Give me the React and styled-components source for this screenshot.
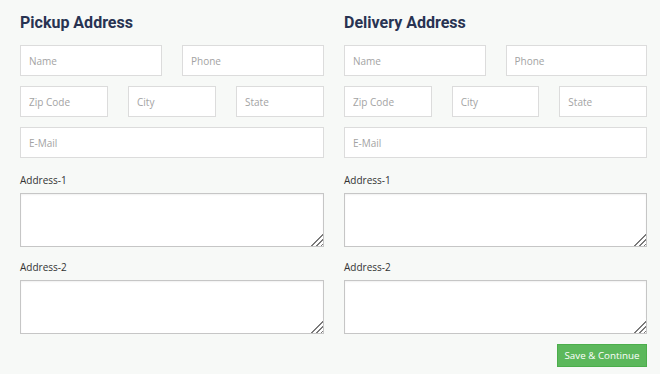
import React from "react";
import styled, { createGlobalStyle } from "styled-components";

const GlobalStyle = createGlobalStyle`
  html, body {
    margin: 0;
    padding: 0;
    background: #ffffff;
  }
  * {
    box-sizing: border-box;
  }
`;

const Page = styled.form`
  height: 374px;
  padding: 12px 13px 0 20px;
  background: #f7f9f7;
  font-family: "Open Sans", "Noto Sans", sans-serif;
`;

const Columns = styled.div`
  display: grid;
  grid-template-columns: 304px 303px;
  column-gap: 20px;
`;

const Column = styled.section`
  display: flex;
  flex-direction: column;
`;

const Heading = styled.h2`
  margin: 0 0 11px;
  font-family: Roboto, "Liberation Sans", sans-serif;
  font-weight: 700;
  font-size: 16px;
  line-height: 22px;
  color: #283352;
`;

const FieldRow = styled.div`
  display: grid;
  grid-template-columns: repeat(${(p) => p.$cols}, 1fr);
  column-gap: 20px;
  margin-bottom: 10px;
`;

const Input = styled.input`
  width: 100%;
  height: 31px;
  padding: 0 8px;
  border: 1px solid #dcdcdc;
  background: #ffffff;
  font-family: "Open Sans", "Noto Sans", sans-serif;
  font-size: 10px;
  color: #333;
  outline: none;
  &::placeholder {
    color: #a3a3a3;
  }
`;

const Label = styled.label`
  display: block;
  margin: ${(p) => p.$top}px 0 6px;
  font-size: 10px;
  line-height: 14px;
  color: #333;
`;

const TextArea = styled.textarea`
  display: block;
  width: 100%;
  height: 54px;
  border: 1px solid #c6c6c6;
  box-shadow: inset 0 1px 2px rgba(0, 0, 0, 0.06);
  background: #ffffff;
  font-family: "Open Sans", "Noto Sans", sans-serif;
  font-size: 10px;
  outline: none;
  &::-webkit-scrollbar {
    width: 15px;
    height: 15px;
  }
  &::-webkit-resizer {
    background:
      linear-gradient(135deg, #ffffff 50%, transparent 50%),
      repeating-linear-gradient(
        135deg,
        #ffffff 0,
        #ffffff 2.2px,
        #7a7a7a 2.2px,
        #7a7a7a 3.4px
      );
  }
`;

const Footer = styled.div`
  display: flex;
  justify-content: flex-end;
  margin-top: 10px;
`;

const SaveButton = styled.button`
  height: 23px;
  width: 90px;
  padding: 0;
  background: #5cb85c;
  border: 1px solid #4cae4c;
  color: #ffffff;
  font-family: "Open Sans", "Noto Sans", sans-serif;
  font-size: 9.8px;
  cursor: pointer;
`;

const AddressBlock = ({ title }) => (
  <Column>
    <Heading>{title}</Heading>
    <FieldRow $cols={2}>
      <Input placeholder="Name" />
      <Input placeholder="Phone" />
    </FieldRow>
    <FieldRow $cols={3}>
      <Input placeholder="Zip Code" />
      <Input placeholder="City" />
      <Input placeholder="State" />
    </FieldRow>
    <FieldRow $cols={1}>
      <Input placeholder="E-Mail" />
    </FieldRow>
    <Label $top={5}>Address-1</Label>
    <TextArea />
    <Label $top={13}>Address-2</Label>
    <TextArea />
  </Column>
);

const App = () => (
  <>
    <GlobalStyle />
    <Page onSubmit={(e) => e.preventDefault()}>
      <Columns>
        <AddressBlock title="Pickup Address" />
        <AddressBlock title="Delivery Address" />
      </Columns>
      <Footer>
        <SaveButton type="submit">Save &amp; Continue</SaveButton>
      </Footer>
    </Page>
  </>
);

export default App;
